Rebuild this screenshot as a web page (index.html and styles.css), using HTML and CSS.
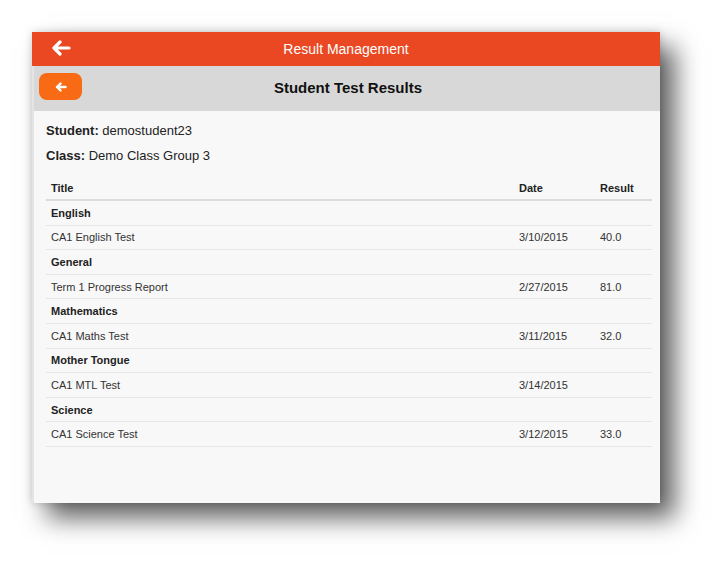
FILE: index.html
```html
<!DOCTYPE html>
<html>
<head>
<meta charset="utf-8">
<link rel="stylesheet" href="styles.css">
</head>
<body>
<div class="stage">
  <div class="panel">
    <header class="topbar">
      <span class="top-back">
        <svg width="20" height="16" viewBox="0 0 20 16"><path d="M9 2 L3 8 L9 14 M3 8 H18" fill="none" stroke="#fff" stroke-width="3.2" stroke-linecap="round" stroke-linejoin="round"/></svg>
      </span>
      <span class="top-title">Result Management</span>
    </header>
    <div class="body">
      <div class="subbar">
        <button class="back-btn">
          <svg width="12" height="10" viewBox="0 0 12 10"><path d="M5.5 1.5 L2 5 L5.5 8.5 M2 5 H10.5" fill="none" stroke="#fff" stroke-width="2.4" stroke-linecap="round" stroke-linejoin="round"/></svg>
        </button>
        <h1 class="sub-title">Student Test Results</h1>
      </div>
      <div class="content">
        <p class="info"><b>Student:</b> demostudent23</p>
        <p class="info"><b>Class:</b> Demo Class Group 3</p>
        <table class="results">
          <thead>
            <tr><th class="c-title">Title</th><th class="c-date">Date</th><th class="c-res">Result</th></tr>
          </thead>
          <tbody>
            <tr class="grp"><td colspan="3">English</td></tr>
            <tr><td>CA1 English Test</td><td>3/10/2015</td><td>40.0</td></tr>
            <tr class="grp"><td colspan="3">General</td></tr>
            <tr><td>Term 1 Progress Report</td><td>2/27/2015</td><td>81.0</td></tr>
            <tr class="grp"><td colspan="3">Mathematics</td></tr>
            <tr><td>CA1 Maths Test</td><td>3/11/2015</td><td>32.0</td></tr>
            <tr class="grp"><td colspan="3">Mother Tongue</td></tr>
            <tr><td>CA1 MTL Test</td><td>3/14/2015</td><td></td></tr>
            <tr class="grp"><td colspan="3">Science</td></tr>
            <tr><td>CA1 Science Test</td><td>3/12/2015</td><td>33.0</td></tr>
          </tbody>
        </table>
      </div>
    </div>
  </div>
</div>
</body>
</html>
```
FILE: styles.css
```css
html, body {
  margin: 0;
  padding: 0;
  background: #ffffff;
}
body {
  font-family: "Liberation Sans", Arial, Helvetica, sans-serif;
  width: 725px;
  height: 568px;
  overflow: hidden;
}
.stage {
  padding: 32px 0 0 32px;
}
.panel {
  width: 628px;
  height: 471px;
  background: #f8f8f8;
  box-shadow: 15px 15px 24px rgba(0,0,0,0.62), 0 0 8px rgba(0,0,0,0.18);
  display: flex;
  flex-direction: column;
}
.topbar {
  height: 34px;
  background: #ea4822;
  display: flex;
  align-items: center;
  position: relative;
}
.top-back {
  position: absolute;
  left: 19px;
  top: 8px;
  display: flex;
}
.top-title {
  flex: 1;
  text-align: center;
  color: #fff;
  font-size: 14px;
  padding-bottom: 1px;
}
.body {
  flex: 1;
  border-left: 2px solid #e4e4e4;
  display: flex;
  flex-direction: column;
}
.subbar {
  height: 45px;
  background: #d8d8d8;
  display: flex;
  align-items: center;
  position: relative;
}
.back-btn {
  position: absolute;
  left: 5px;
  top: 7px;
  width: 43px;
  height: 27px;
  border: none;
  border-radius: 8px;
  background: #f96a14;
  display: flex;
  align-items: center;
  justify-content: center;
  padding: 0;
}
.sub-title {
  flex: 1;
  margin: 0;
  text-align: center;
  font-size: 15px;
  font-weight: bold;
  color: #111;
  padding-left: 2px;
  padding-bottom: 3px;
}
.content {
  padding: 11px 6px 0 12px;
}
.info {
  margin: 0 0 8px 0;
  font-size: 13px;
  line-height: 17px;
  color: #222;
}
.info b {
  color: #222;
}
.results {
  margin-top: 12px;
  width: 606px;
  border-collapse: collapse;
  font-size: 11px;
  color: #333;
}
.results th {
  text-align: left;
  font-weight: bold;
  color: #222;
  height: 23px;
  padding: 0 5px;
  border-bottom: 2px solid #dcdcdc;
}
.results td {
  height: 23.6px;
  padding: 0 5px;
  border-bottom: 1px solid #e6e6e6;
}
.results .grp td {
  font-weight: bold;
  color: #222;
}
.c-title { width: 458px; }
.c-date { width: 71px; }
```
